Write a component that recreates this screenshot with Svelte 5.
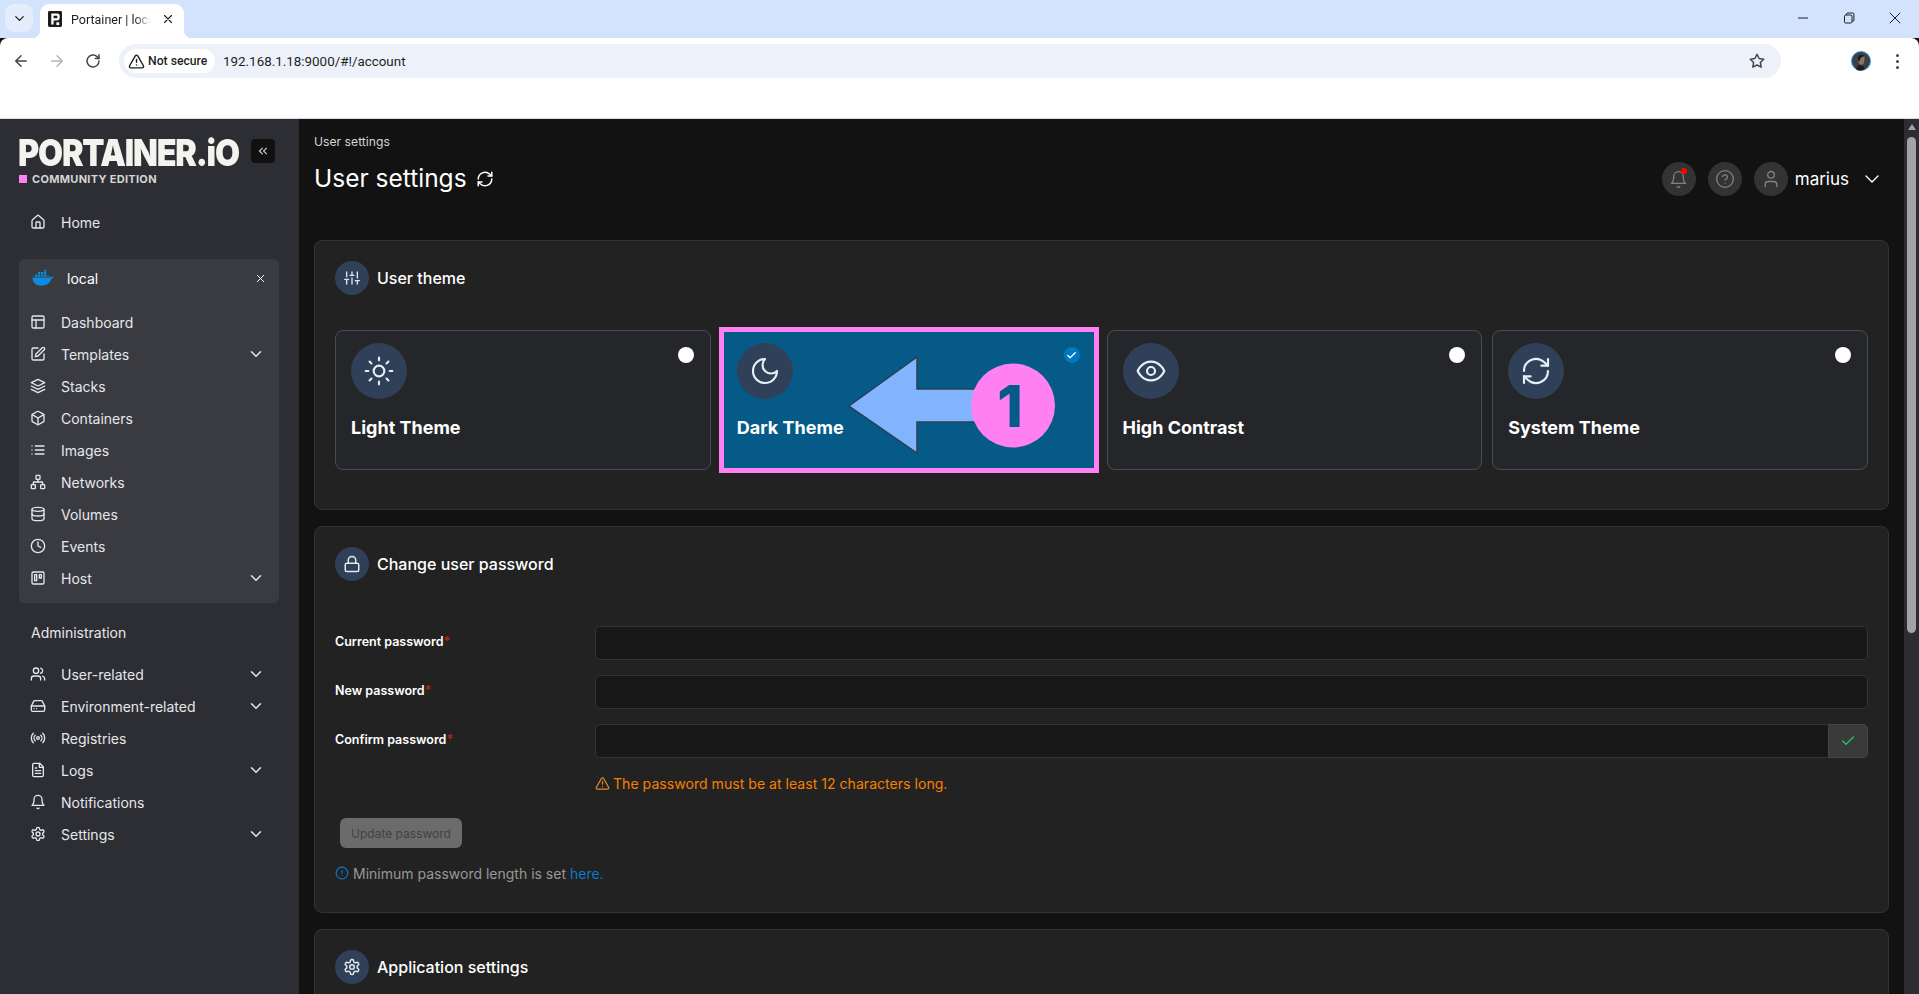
<script>
  const icons = {
    home: '<path d="M15 21v-8a1 1 0 0 0-1-1h-4a1 1 0 0 0-1 1v8"/><path d="M3 10a2 2 0 0 1 .709-1.528l7-5.999a2 2 0 0 1 2.582 0l7 5.999A2 2 0 0 1 21 10v9a2 2 0 0 1-2 2H5a2 2 0 0 1-2-2z"/>',
    layout: '<rect x="3" y="3" width="18" height="18" rx="2"/><path d="M3 9h18"/><path d="M9 21V9"/>',
    edit: '<path d="M12 3H5a2 2 0 0 0-2 2v14a2 2 0 0 0 2 2h14a2 2 0 0 0 2-2v-7"/><path d="M18.375 2.625a2.121 2.121 0 1 1 3 3L12 15l-4 1 1-4Z"/>',
    layers: '<path d="m12 2-10 5 10 5 10-5z"/><path d="m2 17 10 5 10-5"/><path d="m2 12 10 5 10-5"/>',
    box: '<path d="M21 16V8a2 2 0 0 0-1-1.73l-7-4a2 2 0 0 0-2 0l-7 4A2 2 0 0 0 3 8v8a2 2 0 0 0 1 1.73l7 4a2 2 0 0 0 2 0l7-4A2 2 0 0 0 21 16z"/><path d="m3.3 7 8.7 5 8.7-5"/><path d="M12 22V12"/>',
    list: '<path d="M8 6h13M8 12h13M8 18h13M3 6h.01M3 12h.01M3 18h.01"/>',
    network: '<rect x="16" y="16" width="6" height="6" rx="1"/><rect x="2" y="16" width="6" height="6" rx="1"/><rect x="9" y="2" width="6" height="6" rx="1"/><path d="M5 16v-3a1 1 0 0 1 1-1h12a1 1 0 0 1 1 1v3"/><path d="M12 12V8"/>',
    database: '<ellipse cx="12" cy="5" rx="9" ry="3"/><path d="M3 5V19A9 3 0 0 0 21 19V5"/><path d="M3 12A9 3 0 0 0 21 12"/>',
    clock: '<circle cx="12" cy="12" r="10"/><path d="M12 6v6l4 2"/>',
    trello: '<rect x="3" y="3" width="18" height="18" rx="2"/><rect x="7" y="7" width="3" height="9"/><rect x="14" y="7" width="3" height="5"/>',
    users: '<path d="M16 21v-2a4 4 0 0 0-4-4H6a4 4 0 0 0-4 4v2"/><circle cx="9" cy="7" r="4"/><path d="M22 21v-2a4 4 0 0 0-3-3.87"/><path d="M16 3.13a4 4 0 0 1 0 7.75"/>',
    drive: '<path d="M22 12H2"/><path d="M5.45 5.11 2 12v6a2 2 0 0 0 2 2h16a2 2 0 0 0 2-2v-6l-3.45-6.89A2 2 0 0 0 16.76 4H7.24a2 2 0 0 0-1.79 1.11z"/><path d="M6 16h.01M10 16h.01"/>',
    radio: '<path d="M4.9 19.1C1 15.2 1 8.8 4.9 4.9"/><path d="M7.8 16.2c-2.3-2.3-2.3-6.1 0-8.5"/><circle cx="12" cy="12" r="2"/><path d="M16.2 7.8c2.3 2.3 2.3 6.1 0 8.5"/><path d="M19.1 4.9C23 8.8 23 15.1 19.1 19"/>',
    file: '<path d="M14.5 2H6a2 2 0 0 0-2 2v16a2 2 0 0 0 2 2h12a2 2 0 0 0 2-2V7.5L14.5 2z"/><path d="M14 2v6h6"/><path d="M16 13H8M16 17H8M10 9H8"/>',
    bell: '<path d="M6 8a6 6 0 0 1 12 0c0 7 3 9 3 9H3s3-2 3-9"/><path d="M10.3 21a1.94 1.94 0 0 0 3.4 0"/>',
    gear: '<path d="M12.22 2h-.44a2 2 0 0 0-2 2v.18a2 2 0 0 1-1 1.73l-.43.25a2 2 0 0 1-2 0l-.15-.08a2 2 0 0 0-2.73.73l-.22.38a2 2 0 0 0 .73 2.73l.15.1a2 2 0 0 1 1 1.72v.51a2 2 0 0 1-1 1.74l-.15.09a2 2 0 0 0-.73 2.73l.22.38a2 2 0 0 0 2.73.73l.15-.08a2 2 0 0 1 2 0l.43.25a2 2 0 0 1 1 1.73V20a2 2 0 0 0 2 2h.44a2 2 0 0 0 2-2v-.18a2 2 0 0 1 1-1.73l.43-.25a2 2 0 0 1 2 0l.15.08a2 2 0 0 0 2.73-.73l.22-.39a2 2 0 0 0-.73-2.73l-.15-.08a2 2 0 0 1-1-1.74v-.5a2 2 0 0 1 1-1.74l.15-.09a2 2 0 0 0 .73-2.73l-.22-.38a2 2 0 0 0-2.73-.73l-.15.08a2 2 0 0 1-2 0l-.43-.25a2 2 0 0 1-1-1.73V4a2 2 0 0 0-2-2z"/><circle cx="12" cy="12" r="3"/>',
    sliders: '<path d="M4 21v-7M4 10V3M12 21v-9M12 8V3M20 21v-5M20 12V3M1 14h6M9 8h6M17 16h6"/>',
    sun: '<circle cx="12" cy="12" r="4"/><path d="M12 2v2M12 20v2M4.93 4.93l1.41 1.41M17.66 17.66l1.41 1.41M2 12h2M20 12h2M6.34 17.66l-1.41 1.41M19.07 4.93l-1.41 1.41"/>',
    moon: '<path d="M12 3a6 6 0 0 0 9 9 9 9 0 1 1-9-9Z"/>',
    eye: '<path d="M2 12s3-7 10-7 10 7 10 7-3 7-10 7-10-7-10-7Z"/><circle cx="12" cy="12" r="3"/>',
    refresh: '<path d="M3 12a9 9 0 0 1 15-6.7L21 8"/><path d="M21 3v5h-5"/><path d="M21 12a9 9 0 0 1-15 6.7L3 16"/><path d="M8 16H3v5"/>',
    lock: '<rect x="3" y="11" width="18" height="11" rx="2"/><path d="M7 11V7a5 5 0 0 1 10 0v4"/>',
    warn: '<path d="m21.73 18-8-14a2 2 0 0 0-3.46 0l-8 14A2 2 0 0 0 4 21h16a2 2 0 0 0 1.73-3Z"/><path d="M12 9v4M12 17h.01"/>',
    alert: '<circle cx="12" cy="12" r="10"/><path d="M12 8v4M12 16h.01"/>',
    check: '<path d="M20 6 9 17l-5-5"/>',
    user: '<path d="M19 21v-2a4 4 0 0 0-4-4H9a4 4 0 0 0-4 4v2"/><circle cx="12" cy="7" r="4"/>',
    help: '<circle cx="12" cy="12" r="10"/><path d="M9.09 9a3 3 0 0 1 5.83 1c0 2-3 3-3 3"/><path d="M12 17h.01"/>',
    down: '<path d="m6 9 6 6 6-6"/>',
    doubleLeft: '<path d="m11 17-5-5 5-5"/><path d="m18 17-5-5 5-5"/>',
    x: '<path d="M18 6 6 18M6 6l12 12"/>',
    back: '<path d="M19 12H5M12 19l-7-7 7-7"/>',
    forward: '<path d="M5 12h14M12 5l7 7-7 7"/>',
    reload: '<path d="M20 12a8 8 0 1 1-2.6-5.9L20 8.5"/><path d="M20 3.5v5h-5"/>',
    star: '<path d="m12 3 2.8 5.7 6.2.9-4.500 4.400 1.100 6.200L12 17.300l-5.600 2.900 1.100-6.200L3 9.600l6.200-.9Z"/>'
  };

  const envItems = [
    { icon: "layout", label: "Dashboard" },
    { icon: "edit", label: "Templates", more: true },
    { icon: "layers", label: "Stacks" },
    { icon: "box", label: "Containers" },
    { icon: "list", label: "Images" },
    { icon: "network", label: "Networks" },
    { icon: "database", label: "Volumes" },
    { icon: "clock", label: "Events" },
    { icon: "trello", label: "Host", more: true }
  ];

  const adminItems = [
    { icon: "users", label: "User-related", more: true },
    { icon: "drive", label: "Environment-related", more: true },
    { icon: "radio", label: "Registries" },
    { icon: "file", label: "Logs", more: true },
    { icon: "bell", label: "Notifications" },
    { icon: "gear", label: "Settings", more: true }
  ];

  const themes = [
    { icon: "sun", label: "Light Theme" },
    { icon: "moon", label: "Dark Theme", active: true },
    { icon: "eye", label: "High Contrast" },
    { icon: "refresh", label: "System Theme" }
  ];
</script>

{#snippet icon(name, size = 16, cls = "", weight = 2)}
  <svg class={cls} width={size} height={size} viewBox="0 0 24 24" fill="none" stroke="currentColor" stroke-width={weight} stroke-linecap="round" stroke-linejoin="round">{@html icons[name]}</svg>
{/snippet}

{#snippet navRow(item)}
  <li class="nav-row">
    {@render icon(item.icon)}
    <span class="nav-label">{item.label}</span>
    {#if item.more}{@render icon("down", 18, "nav-more")}{/if}
  </li>
{/snippet}

<div class="browser">
  <div class="tabstrip">
    <div class="tab-search">{@render icon("down", 15)}</div>
    <div class="tab">
      <svg class="favicon" width="14" height="16" viewBox="0 0 15 17">
        <rect x="0" y="0" width="15" height="17" rx="1.500" fill="#1c1c1c" />
        <path d="M3.500 2.500h6.500a2.500 2.500 0 0 1 2.500 2.500v2.500a2.500 2.500 0 0 1-2.500 2.500H6v4.500H3.500z" fill="#fff" />
        <rect x="6" y="5" width="4" height="2.600" fill="#1c1c1c" />
        <rect x="9" y="12" width="3" height="3" fill="#fff" />
      </svg>
      <span class="tab-title">Portainer | local</span>
      {@render icon("x", 14, "tab-close")}
    </div>
    <div class="window-controls">
      <svg width="12" height="12" viewBox="0 0 12 12"><path d="M1 6h10" stroke="#1f1f1f" /></svg>
      <svg width="12" height="12" viewBox="0 0 12 12" fill="none" stroke="#1f1f1f"><rect x="1.500" y="3" width="7.500" height="8" rx="1.200" /><path d="M3.500 3V2.200A1.200 1.200 0 0 1 4.700 1h5a1.200 1.200 0 0 1 1.200 1.200v6a1 1 0 0 1-1 1H9" /></svg>
      <svg width="12" height="12" viewBox="0 0 12 12"><path d="M.8.8l10.400 10.400M11.200.8.8 11.200" stroke="#1f1f1f" /></svg>
    </div>
  </div>
  <div class="toolbar">
    <div class="nav-buttons">
      <span class="tool">{@render icon("back", 18)}</span>
      <span class="tool off">{@render icon("forward", 18)}</span>
      <span class="tool">{@render icon("reload", 18)}</span>
    </div>
    <div class="omnibox">
      <span class="chip">{@render icon("warn", 17)}<span>Not secure</span></span>
      <span class="url">192.168.1.18:9000/#!/account</span>
      {@render icon("star", 18, "star")}
    </div>
    <svg class="avatar" width="20" height="20" viewBox="0 0 20 20">
      <circle cx="10" cy="10" r="10" fill="#3f97d6" />
      <circle cx="10" cy="10" r="9" fill="#3a4046" />
      <path d="M6.500 8c0-3 2-4.500 4-4.500s3.500 1.500 3 5l-.5 3c-.5 1.500-1.500 2.500-3 2.500l-2.500-2z" fill="#8f7362" />
      <path d="M6.500 8c0-3 2-4.500 4-4.500 1.500 0 3 .8 3 2-2 0-3 .5-4 2L8 11z" fill="#1f1a18" />
      <path d="M5 18c1-3 3-4 4-4l3 1 2 3-3 1.500H7z" fill="#1c1c1c" />
    </svg>
    <span class="kebab"><i></i><i></i><i></i></span>
  </div>
</div>

<div class="app">
  <aside class="sidebar">
    <div class="brand">
      <span class="logo-box"><span class="logo">PORTAINER.iO</span></span>
      <button class="collapse">{@render icon("doubleLeft", 14)}</button>
    </div>
    <div class="edition"><i></i>COMMUNITY EDITION</div>

    <ul class="nav top-nav">
      {@render navRow({ icon: "home", label: "Home" })}
    </ul>

    <div class="env-panel">
      <div class="env-head">
        <svg class="docker" width="23" height="16" viewBox="0 0 23 16">
          <path d="M.4 7.600h17c.6-.1 1-.4 1.200-.9.700.4 1.500.5 2.500.1l1.400-.4c-.6 1-1.500 1.700-2.800 1.900-1.400 4.400-5 7.500-10.500 7.500-5 0-8.400-2.500-8.800-8.200z" fill="#0d8be0" />
          <path d="M3 4.500h2.300v2.300H3zM6 4.500h2.300v2.300H6zM9 4.500h2.300v2.300H9zM12 4.500h2.300v2.300H12zM15 5.500h2v1.300h-2zM6 2h2.300v2H6zM9 2h2.300v2H9zM12 2h2.300v2H12zM12 0h2.300v1.600H12z" fill="#0d8be0" />
        </svg>
        <span class="env-name">local</span>
        {@render icon("x", 13, "env-close", 1.8)}
      </div>
      <ul class="nav">
        {#each envItems as item}
          {@render navRow(item)}
        {/each}
      </ul>
    </div>

    <div class="section-title">Administration</div>
    <ul class="nav top-nav">
      {#each adminItems as item}
        {@render navRow(item)}
      {/each}
    </ul>
  </aside>

  <main class="main">
    <header class="page-head">
      <div>
        <div class="crumb">User settings</div>
        <div class="page-title">
          <h1>User settings</h1>
          {@render icon("refresh", 18)}
        </div>
      </div>
      <div class="user-menu">
        <span class="round bell-wrap">{@render icon("bell", 19, "", 1.6)}<i class="dot"></i></span>
        <span class="round">{@render icon("help", 20, "", 1.6)}</span>
        <span class="round">{@render icon("user", 20, "", 1.6)}</span>
        <span class="user-name">marius</span>
        {@render icon("down", 24, "user-more", 1.4)}
      </div>
    </header>

    <section class="card theme-card">
      <div class="card-head">
        <span class="badge">{@render icon("sliders", 16)}</span>
        <h2>User theme</h2>
      </div>
      <div class="theme-grid">
        {#each themes as theme}
          <div class="tile" class:active={theme.active}>
            <div class="tile-top">
              <span class="tile-icon">{@render icon(theme.icon, 32, "", 1.6)}</span>
              {#if theme.active}
                <span class="radio on">{@render icon("check", 11, "", 3)}</span>
              {:else}
                <span class="radio"></span>
              {/if}
            </div>
            <div class="tile-label">{theme.label}</div>
            {#if theme.active}
              <div class="mark"></div>
              <svg class="callout" width="373" height="138" viewBox="0 0 373 138">
                <path d="M127 75 195 26V58H280V91H195V122Z" fill="#80b4ff" stroke="#2d3e50" stroke-width="1.500" stroke-linejoin="miter" />
                <circle cx="291" cy="74.500" r="42" fill="#ff80f0" />
                <text x="288" y="96" text-anchor="middle" class="callout-num">1</text>
              </svg>
            {/if}
          </div>
        {/each}
      </div>
    </section>

    <section class="card password-card">
      <div class="card-head">
        <span class="badge">{@render icon("lock", 18)}</span>
        <h2>Change user password</h2>
      </div>
      <div class="form">
        <div class="form-row">
          <label for="cur">Current password<em>*</em></label>
          <input id="cur" type="password" />
        </div>
        <div class="form-row">
          <label for="new">New password<em>*</em></label>
          <input id="new" type="password" />
        </div>
        <div class="form-row">
          <label for="conf">Confirm password<em>*</em></label>
          <div class="input-group">
            <input id="conf" type="password" />
            <span class="addon">{@render icon("check", 16)}</span>
          </div>
        </div>
      </div>
      <div class="warning">{@render icon("warn", 15)}<span>The password must be at least 12 characters long.</span></div>
      <button class="update" disabled>Update password</button>
      <p class="hint">{@render icon("alert", 14)}<span>Minimum password length is set <a href="#here">here.</a></span></p>
    </section>

    <section class="card">
      <div class="card-head">
        <span class="badge">{@render icon("gear", 18)}</span>
        <h2>Application settings</h2>
      </div>
    </section>
  </main>

  <div class="scrollbar">
    <span class="scroll-up"></span>
    <span class="scroll-thumb"></span>
  </div>
</div>

<style>
  :global(body) {
    margin: 0;
    overflow: hidden;
    background: #121212;
    font-family: Inter, "Liberation Sans", sans-serif;
  }
  ul {
    list-style: none;
    margin: 0;
    padding: 0;
  }
  svg {
    flex: none;
    display: block;
  }

  /* browser chrome */
  .browser {
    font-family: Roboto, "Liberation Sans", sans-serif;
    color: #1f1f1f;
  }
  .tabstrip {
    height: 38px;
    background: #d3e3fd;
    display: flex;
    box-sizing: border-box;
    padding: 4px 0 0 5px;
  }
  .tab-search {
    width: 28px;
    height: 28px;
    border-radius: 9px;
    background: #e4edfc;
    display: flex;
    align-items: center;
    justify-content: center;
    margin-right: 7px;
  }
  .tab {
    position: relative;
    width: 144px;
    height: 34px;
    background: #fff;
    border-radius: 9px 9px 0 0;
    display: flex;
    align-items: center;
    box-sizing: border-box;
    padding: 0 9px 4px 8px;
  }
  .tab::before,
  .tab::after {
    content: "";
    position: absolute;
    bottom: 0;
    width: 8px;
    height: 8px;
  }
  .tab::before {
    left: -8px;
    background: radial-gradient(circle at 0 0, transparent 8px, #fff 8.500px);
  }
  .tab::after {
    right: -8px;
    background: radial-gradient(circle at 100% 0, transparent 8px, #fff 8.500px);
  }
  .favicon {
    margin-right: 9px;
  }
  .tab-title {
    width: 80px;
    font-size: 12.500px;
    white-space: nowrap;
    overflow: hidden;
    -webkit-mask-image: linear-gradient(90deg, #000 80%, transparent);
    mask-image: linear-gradient(90deg, #000 80%, transparent);
  }
  :global(.tab-close) {
    margin-left: auto;
  }
  .window-controls {
    margin-left: auto;
    display: flex;
    gap: 34px;
    padding: 8px 18px 0 0;
  }
  .toolbar {
    height: 81px;
    box-sizing: border-box;
    background: #fff;
    border-bottom: 1px solid #dcdcdc;
    border-radius: 8px 8px 0 0;
    display: flex;
    align-items: flex-start;
    padding-top: 6px;
  }
  .nav-buttons {
    display: flex;
    width: 119px;
    padding-left: 12px;
    box-sizing: border-box;
    gap: 18px;
    color: #444746;
  }
  .tool {
    height: 34px;
    display: flex;
    align-items: center;
  }
  .tool.off {
    color: #b4b6b6;
  }
  .omnibox {
    width: 1662px;
    height: 34px;
    box-sizing: border-box;
    border-radius: 17px;
    background: #edf2fa;
    display: flex;
    align-items: center;
    padding: 0 15px 0 5px;
  }
  .chip {
    height: 24px;
    width: 91px;
    box-sizing: border-box;
    background: #fff;
    border-radius: 12px;
    display: flex;
    align-items: center;
    gap: 3px;
    padding-left: 4px;
    font-size: 12.200px;
    font-weight: 500;
  }
  .url {
    margin-left: 8px;
    font-size: 13.400px;
  }
  :global(.star) {
    margin-left: auto;
    color: #444746;
  }
  .avatar {
    margin: 7px 0 0 70px;
  }
  .kebab {
    margin: 10px 0 0 25px;
    display: flex;
    flex-direction: column;
    gap: 3px;
  }
  .kebab i {
    width: 3px;
    height: 3px;
    border-radius: 50%;
    background: #444746;
  }

  /* portainer shell */
  .app {
    height: 875px;
    display: flex;
    overflow: hidden;
    color: #fff;
  }
  .sidebar {
    width: 299px;
    flex: none;
    background: #2d2e33;
    color: #e5e7eb;
    box-sizing: border-box;
    padding-top: 20px;
    font-size: 14px;
  }
  .brand {
    display: flex;
    justify-content: space-between;
    padding: 0 24px 0 18px;
  }
  .logo-box {
    width: 222px;
    height: 27px;
  }
  .logo {
    display: inline-block;
    font-size: 37px;
    line-height: 27px;
    font-weight: 900;
    letter-spacing: -1.400px;
    color: #f5f3ef;
    white-space: nowrap;
    transform: scaleX(0.875);
    transform-origin: left center;
  }
  .collapse {
    width: 24px;
    height: 24px;
    padding: 0;
    border: 0;
    border-radius: 4px;
    background: #111;
    color: #c9c9c9;
    display: flex;
    align-items: center;
    justify-content: center;
  }
  .edition {
    margin: 9px 0 0 19px;
    height: 8px;
    display: flex;
    align-items: center;
    gap: 5px;
    font-size: 11px;
    font-weight: 700;
    letter-spacing: 0.300px;
    color: #d5d5d5;
  }
  .edition i {
    width: 8px;
    height: 8px;
    background: #ff80f0;
  }
  .top-nav {
    margin-top: 15px;
  }
  .edition + .top-nav {
    margin-top: 23px;
  }
  .top-nav .nav-row {
    padding-left: 30px;
  }
  .nav-row {
    height: 32px;
    display: flex;
    align-items: center;
    padding-left: 11px;
    padding-right: 14px;
  }
  .top-nav .nav-row {
    padding-right: 34px;
  }
  .nav-label {
    margin-left: 15px;
  }
  :global(.nav-more) {
    margin-left: auto;
  }
  .env-panel {
    margin: 21px 20px 0 19px;
    padding: 3px 0 9px;
    background: #3a3b40;
    border-radius: 5px;
  }
  .env-head {
    height: 32px;
    display: flex;
    align-items: center;
    padding: 0 12px 0 13px;
    margin-bottom: 12px;
    color: #fff;
  }
  .env-name {
    margin-left: 12px;
  }
  :global(.env-close) {
    margin-left: auto;
  }
  .section-title {
    margin: 20px 0 0 31px;
    line-height: 20px;
  }

  .main {
    flex: 1;
    min-width: 0;
    padding: 15px 15px 0 15px;
  }
  .page-head {
    display: flex;
    justify-content: space-between;
    align-items: flex-end;
    margin-bottom: 44px;
  }
  .crumb {
    font-size: 12.200px;
    line-height: 16px;
    color: #d4d4d4;
  }
  .page-title {
    margin-top: 12px;
    height: 34px;
    display: flex;
    align-items: center;
    gap: 9px;
  }
  h1 {
    margin: -2px 0 0;
    font-size: 24.500px;
    font-weight: 400;
  }
  .user-menu {
    display: flex;
    align-items: center;
    gap: 12px;
    padding-right: 5px;
  }
  .round {
    position: relative;
    width: 34px;
    height: 34px;
    border-radius: 50%;
    background: #333;
    color: #828282;
    display: flex;
    align-items: center;
    justify-content: center;
  }
  .dot {
    position: absolute;
    top: 6px;
    right: 9px;
    width: 6px;
    height: 6px;
    border-radius: 50%;
    background: #f00;
  }
  .user-name {
    margin-left: -5px;
    font-size: 17px;
  }
  :global(.user-more) {
    margin-left: -1px;
  }

  .card {
    background: #222;
    border: 1px solid #333;
    border-radius: 8px;
    padding: 20px 20px 39px;
    margin-bottom: 16px;
  }
  .card-head {
    display: flex;
    align-items: center;
    gap: 8px;
    height: 34px;
  }
  .badge {
    width: 34px;
    height: 34px;
    border-radius: 50%;
    background: #2f4058;
    color: #e2e8f0;
    display: flex;
    align-items: center;
    justify-content: center;
  }
  h2 {
    margin: 0;
    font-size: 16px;
    font-weight: 500;
  }
  .theme-grid {
    margin-top: 35px;
    display: grid;
    grid-template-columns: repeat(4, 1fr);
    gap: 10px;
  }
  .tile {
    position: relative;
    height: 140px;
    box-sizing: border-box;
    border: 1px solid #454c58;
    border-radius: 8px;
    background: #25262a;
    padding: 12px 16px 0 15px;
  }
  .tile.active {
    background: #055a88;
    border-color: #055a88;
    border-radius: 0;
  }
  .tile-top {
    display: flex;
    justify-content: space-between;
    align-items: flex-start;
  }
  .tile-icon {
    width: 56px;
    height: 56px;
    border-radius: 50%;
    background: #2f4058;
    color: #e8eff7;
    display: flex;
    align-items: center;
    justify-content: center;
  }
  .radio {
    margin-top: 4px;
    width: 16px;
    height: 16px;
    border-radius: 50%;
    background: #fff;
    color: #fff;
    display: flex;
    align-items: center;
    justify-content: center;
  }
  .radio.on {
    background: #0078c4;
  }
  .tile-label {
    margin-top: 18px;
    font-size: 18px;
    line-height: 22px;
    font-weight: 700;
  }
  .mark {
    position: absolute;
    inset: -4px -3px;
    border: 5px solid #ff80f0;
    pointer-events: none;
  }
  .callout {
    position: absolute;
    left: 0;
    top: 0;
    pointer-events: none;
  }
  .callout-num {
    font-size: 58px;
    font-weight: 800;
    fill: #055a88;
  }

  .form {
    margin-top: 45px;
    display: flex;
    flex-direction: column;
    gap: 15px;
  }
  .form-row {
    display: grid;
    grid-template-columns: 260px 1fr;
    align-items: center;
  }
  label {
    font-size: 12.500px;
    font-weight: 600;
    padding-bottom: 3px;
  }
  label em {
    color: #b3261e;
    font-style: normal;
  }
  input {
    width: 100%;
    height: 34px;
    box-sizing: border-box;
    background: #181818;
    border: 1px solid #343434;
    border-radius: 5px;
  }
  .input-group {
    display: flex;
  }
  .input-group input {
    border-radius: 5px 0 0 5px;
    border-right: 0;
  }
  .addon {
    width: 40px;
    flex: none;
    box-sizing: border-box;
    background: #3a3a3a;
    border: 1px solid #444;
    border-radius: 0 5px 5px 0;
    color: #22c55e;
    display: flex;
    align-items: center;
    justify-content: center;
  }
  .warning {
    margin: 15px 0 0 260px;
    height: 20px;
    display: flex;
    align-items: center;
    gap: 3px;
    font-size: 14.100px;
    color: #f77f00;
  }
  .warning :global(svg) {
    color: #e08a2c;
  }
  .update {
    display: block;
    margin: 25px 0 0 5px;
    width: 122px;
    height: 30px;
    padding: 0;
    border: 0;
    border-radius: 6px;
    background: #6b6b6b;
    color: #424242;
    font: 12px Inter, "Liberation Sans", sans-serif;
  }
  .hint {
    margin: 15px 0 0;
    height: 20px;
    display: flex;
    align-items: center;
    gap: 4px;
    font-size: 14px;
    color: #989898;
  }
  .hint :global(svg) {
    color: #0b79c6;
  }
  .hint a {
    color: #0b79c6;
    text-decoration: none;
  }
  .password-card {
    padding-bottom: 29px;
  }

  .scrollbar {
    width: 15px;
    flex: none;
    background: #2c2d32;
    position: relative;
    display: flex;
    flex-direction: column;
    align-items: center;
  }
  .scroll-up {
    margin-top: 5px;
    width: 0;
    height: 0;
    border: 4.500px solid transparent;
    border-top: 0;
    border-bottom: 6px solid #a3a3a3;
  }
  .scroll-thumb {
    margin-top: 7px;
    width: 9px;
    height: 496px;
    border-radius: 5px;
    background: #a3a3a3;
  }
</style>
